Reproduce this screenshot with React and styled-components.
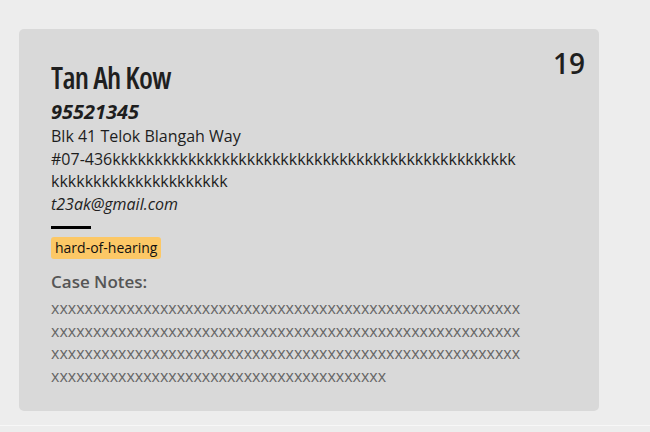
import styled, { createGlobalStyle } from "styled-components";

const GlobalStyle = createGlobalStyle`
  html, body {
    margin: 0;
    padding: 0;
    background: #ededed;
    font-family: "Open Sans", "Noto Sans", sans-serif;
  }
`;

const ListCell = styled.div`
  padding: 29px 51px 14px 19px;
  border-bottom: 1px solid #f7f7f7;
`;

const Card = styled.section`
  display: grid;
  grid-template-columns: 470px 1fr;
  background: #d9d9d9;
  border-radius: 5px;
  padding: 29px 14px 24px 32px;
`;

const Details = styled.div`
  display: flex;
  flex-direction: column;
  align-items: flex-start;
  min-width: 0;
  color: #1e1e1e;
`;

const Name = styled.h1`
  margin: 0;
  font-size: 30px;
  font-weight: 600;
  font-stretch: 86%;
  letter-spacing: -0.7px;
  line-height: 40px;
  color: #1f1f1f;
`;

const Index = styled.div`
  justify-self: end;
  margin-top: -7px;
  font-size: 28px;
  font-weight: 600;
  line-height: 24px;
  color: #1f1f1f;
`;

const Phone = styled.div`
  font-size: 20px;
  font-weight: 700;
  font-style: italic;
  line-height: 27px;
`;

const Line = styled.div`
  max-width: 100%;
  font-size: 16px;
  line-height: 22.5px;
  font-style: ${(p) => (p.$italic ? "italic" : "normal")};
`;

const Unit = styled.span`
  display: inline-block;
  max-width: 100%;
  word-break: break-all;
`;

const Divider = styled.hr`
  width: 40px;
  height: 3px;
  margin: 11px 0 8px;
  border: none;
  background: #000;
`;

const Tags = styled.div`
  display: flex;
  gap: 6px;
`;

const Tag = styled.span`
  background: #fcc866;
  color: #111;
  font-size: 14px;
  line-height: 22px;
  padding: 0 4px;
  border-radius: 3px;
`;

const NotesTitle = styled.h3`
  margin: 12px 0 4px;
  font-size: 17px;
  font-weight: 600;
  line-height: 22px;
  color: #555;
`;

const Notes = styled.p`
  margin: 0;
  max-width: 100%;
  font-size: 16px;
  line-height: 22.5px;
  color: #666;
  word-break: break-all;
`;

const person = {
  name: "Tan Ah Kow",
  phone: "95521345",
  street: "Blk 41 Telok Blangah Way",
  unit: "#07-436" + "k".repeat(69),
  email: "t23ak@gmail.com",
  tags: ["hard-of-hearing"],
  notes: "x".repeat(208),
  index: 19,
};

export default function App() {
  return (
    <>
      <GlobalStyle />
      <ListCell>
        <Card>
          <Details>
            <Name>{person.name}</Name>
            <Phone>{person.phone}</Phone>
            <Line>
              {person.street} <Unit>{person.unit}</Unit>
            </Line>
            <Line $italic>{person.email}</Line>
            <Divider />
            <Tags>
              {person.tags.map((t) => (
                <Tag key={t}>{t}</Tag>
              ))}
            </Tags>
            <NotesTitle>Case Notes:</NotesTitle>
            <Notes>{person.notes}</Notes>
          </Details>
          <Index>{person.index}</Index>
        </Card>
      </ListCell>
    </>
  );
}
